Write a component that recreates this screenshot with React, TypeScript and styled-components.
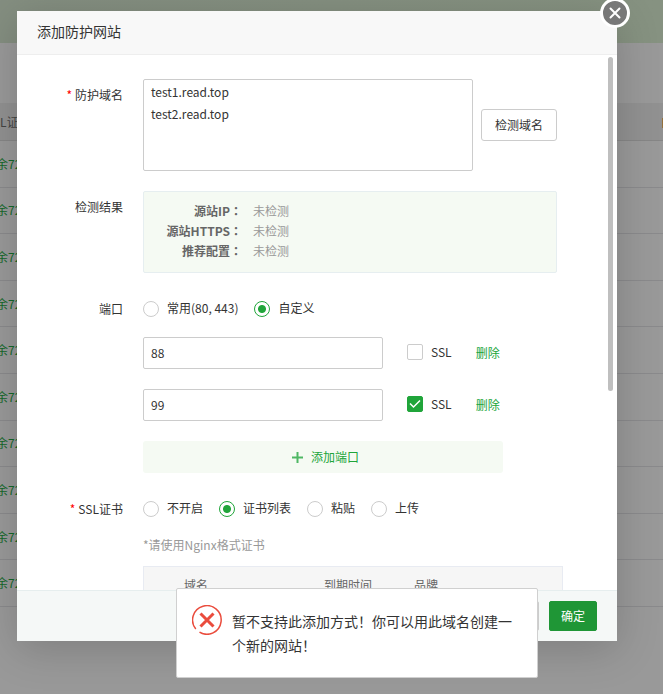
import React, { useState } from "react";
import styled, { createGlobalStyle, css } from "styled-components";

const GREEN = "#20a53a";

const GlobalStyle = createGlobalStyle`
  *, *::before, *::after { box-sizing: border-box; }
  html, body { margin: 0; height: 100%; }
  body {
    font-family: "Noto Sans CJK SC", sans-serif;
    font-size: 12px;
    color: #333;
    background: #999;
    overflow: hidden;
  }
  button, input, textarea { font: inherit; color: inherit; margin: 0; }
`;

const Page = styled.div`
  position: relative;
  height: 100vh;
  overflow: hidden;
`;

/* Dimmed site list behind the dialog */
const Banner = styled.div`
  height: 43px;
  background: linear-gradient(90deg, #848e80, #869281);
`;

const ListTable = styled.table`
  display: block;
  margin-top: 60px;
  line-height: 20px;
`;

const ListHeader = styled.thead`
  display: block;
  background: #919191;
  border-bottom: 1px solid #868686;
`;

const HeadRow = styled.tr`
  display: flex;
  align-items: center;
  justify-content: space-between;
  height: 37px;
`;

const HeadCell = styled.th`
  padding: 0;
  margin-left: -14px;
  color: #444;
  font-weight: 400;
  white-space: nowrap;
`;

const HeadAction = styled.th`
  display: flex;
  padding: 0;
  margin-right: -11px;
`;

const ListBody = styled.tbody`
  display: grid;
  grid-template-rows: repeat(10, 1fr);
  height: 466px;
`;

const ListRow = styled.tr`
  display: flex;
  align-items: center;
  border-bottom: 1px solid #8a8a8c;
`;

const ListCell = styled.td`
  padding: 0;
  margin-left: -16px;
  color: #14682a;
  white-space: nowrap;
`;

const Overlay = styled.div`
  position: absolute;
  inset: 0;
  display: flex;
  padding: 11px 46px 53px 17px;
`;

const Dialog = styled.section`
  position: relative;
  flex: 1;
  min-width: 0;
  display: flex;
  flex-direction: column;
  background: #fff;
  box-shadow: 0 8px 40px rgba(0, 0, 0, 0.18);
`;

const DialogHeader = styled.header`
  flex: none;
  height: 44px;
  padding: 0 20px;
  background: #f8f8f8;
  border-bottom: 1px solid #eee;
`;

const Title = styled.h1`
  margin: 0;
  font-size: 14px;
  font-weight: 400;
  line-height: 40px;
`;

const CloseButton = styled.button`
  position: absolute;
  top: -13px;
  right: -13px;
  width: 30px;
  height: 30px;
  display: grid;
  place-items: center;
  padding: 0;
  border: 3px solid #fff;
  border-radius: 50%;
  background: #787878;
  color: #fff;
`;

const DialogBody = styled.div`
  position: relative;
  flex: 1;
  min-height: 0;
  overflow: hidden;
  padding-top: 24px;
`;

const ScrollThumb = styled.div`
  position: absolute;
  top: 2px;
  right: 4px;
  width: 5px;
  height: 334px;
  border-radius: 3px;
  background: #bfbfbf;
`;

const Form = styled.form`
  display: flex;
  flex-direction: column;
  gap: 20px;
`;

const Field = styled.div`
  display: grid;
  grid-template-columns: 106px minmax(0, 1fr);
  column-gap: 20px;
  padding-right: 54px;
`;

const fieldName = css`
  line-height: 32px;
  text-align: right;
`;

const FieldLabel = styled.label`
  ${fieldName}
`;

const FieldName = styled.span`
  ${fieldName}
`;

const Required = styled.span`
  color: #f00;
  margin-right: 3px;
`;

const DomainRow = styled.div`
  display: flex;
  align-items: center;
  gap: 8px;
  padding-right: 6px;
`;

const DomainArea = styled.textarea`
  display: block;
  flex: 1;
  min-width: 0;
  height: 92px;
  padding: 1px 7px;
  border: 1px solid #ccc;
  border-radius: 2px;
  line-height: 22px;
  resize: none;
  outline: none;
`;

const PlainButton = styled.button`
  height: 32px;
  padding: 0 13px 2px;
  border: 1px solid #ccc;
  border-radius: 3px;
  background: #fff;
`;

const ResultPanel = styled.dl`
  display: grid;
  grid-template-columns: 98px 1fr;
  column-gap: 11px;
  align-content: start;
  height: 82px;
  margin: 0 6px 0 0;
  padding-top: 9px;
  border: 1px solid #e6eef0;
  border-radius: 2px;
  background: #f5faf3;
  line-height: 20px;
`;

const ResultName = styled.dt`
  color: #666;
  font-weight: 700;
  text-align: right;
`;

const Colon = styled.span`
  font-family: "Noto Sans CJK JP", sans-serif;
`;

const ResultValue = styled.dd`
  margin: 0;
  color: #999;
`;

const PortColumn = styled.div`
  display: flex;
  flex-direction: column;
`;

const RadioRow = styled.div`
  display: flex;
  align-items: center;
  gap: 16px;
  height: 32px;
`;

const Choice = styled.label`
  display: flex;
  align-items: center;
  gap: 8px;
  white-space: nowrap;
  line-height: 20px;
`;

const ChoiceText = styled.span`
  padding-bottom: 2px;
`;

const Radio = styled.input`
  appearance: none;
  flex: none;
  width: 16px;
  height: 16px;
  border: 1px solid #ccc;
  border-radius: 50%;
  background: #fff;
  &:checked {
    border-color: ${GREEN};
    background: radial-gradient(circle, ${GREEN} 3.5px, #fff 4.5px);
  }
`;

const PortList = styled.div`
  display: flex;
  flex-direction: column;
  gap: 20px;
  margin-top: 12px;
`;

const PortRow = styled.div`
  display: flex;
  align-items: center;
`;

const PortInput = styled.input`
  width: 240px;
  height: 32px;
  margin-right: 24px;
  padding: 0 7px 2px;
  border: 1px solid #ccc;
  border-radius: 2px;
  outline: none;
`;

const PortSsl = styled(Choice)`
  padding-bottom: 2px;
`;

const CheckWrap = styled.span`
  display: grid;
  width: 16px;
  height: 16px;
  > * { grid-area: 1 / 1; }
  svg { pointer-events: none; }
`;

const Checkbox = styled.input`
  appearance: none;
  width: 16px;
  height: 16px;
  border: 1px solid #ccc;
  border-radius: 2px;
  &:checked {
    border-color: ${GREEN};
    background: ${GREEN};
  }
`;

const TextButton = styled.button`
  margin-left: 24px;
  padding: 0 0 2px;
  border: 0;
  background: none;
  color: ${GREEN};
`;

const AddPort = styled.button`
  display: flex;
  align-items: center;
  justify-content: center;
  gap: 8px;
  width: 360px;
  height: 32px;
  padding: 0 0 0 5px;
  border: 0;
  border-radius: 3px;
  background: #f5faf3;
  color: ${GREEN};
`;

const Hint = styled.p`
  margin: 10px 0 11px;
  color: #999;
  line-height: 20px;
`;

const CertTable = styled.table`
  width: 100%;
  table-layout: fixed;
  border: 1px solid #e8ebf2;
  border-collapse: separate;
  border-spacing: 0;
`;

const CertHead = styled.th<{ $width?: number }>`
  ${(p) => p.$width && `width: ${p.$width}px;`}
  height: 36px;
  padding: 0 0 2px;
  background: #f6f6f6;
  color: #666;
  font-weight: 400;
  text-align: left;
`;

const DialogFooter = styled.footer`
  flex: none;
  display: flex;
  justify-content: flex-end;
  gap: 10px;
  height: 51px;
  padding: 10px 20px;
  border-top: 1px solid #e6eeee;
  background: #f5f8f7;
`;

const FooterButton = styled.button<{ $primary?: boolean }>`
  width: 48px;
  height: 30px;
  padding: 0 0 2px;
  border: 1px solid ${(p) => (p.$primary ? "#1f9636" : "#ccc")};
  border-radius: 2px;
  background: ${(p) => (p.$primary ? "#1f9636" : "#fff")};
  color: ${(p) => (p.$primary ? "#fff" : "#555")};
`;

const Toast = styled.div`
  position: absolute;
  left: 176px;
  bottom: 16px;
  width: 362px;
  display: flex;
  gap: 10px;
  padding: 16px 24px 18px 15px;
  min-height: 90px;
  border: 1px solid #d0d0d0;
  border-radius: 2px;
  background: #fff;
  svg { flex: none; }
`;

const ToastText = styled.p`
  margin: 4px 0 0;
  font-size: 14px;
  line-height: 24px;
`;

const sites = Array.from({ length: 10 }, (_, i) => i);
const results = ["源站IP", "源站HTTPS", "推荐配置"];
const certModes = ["不开启", "证书列表", "粘贴", "上传"];

function SiteList() {
  return (
    <ListTable>
      <ListHeader>
        <HeadRow>
          <HeadCell>SSL证书</HeadCell>
          <HeadAction aria-label="提示">
            <svg width="12" height="12" viewBox="0 0 12 12" fill="#94703c">
              <path d="M0 2H12V12H0Z" />
            </svg>
          </HeadAction>
        </HeadRow>
      </ListHeader>
      <ListBody>
        {sites.map((i) => (
          <ListRow key={i}><ListCell>剩余72天</ListCell></ListRow>
        ))}
      </ListBody>
    </ListTable>
  );
}

export default function App() {
  const [ports, setPorts] = useState([
    { id: 1, value: "88", ssl: false },
    { id: 2, value: "99", ssl: true },
  ]);
  const update = (id: number, patch: { value?: string; ssl?: boolean }) =>
    setPorts(ports.map((p) => (p.id === id ? { ...p, ...patch } : p)));

  return (
    <>
      <GlobalStyle />
      <Page>
        <Banner />
        <SiteList />
        <Overlay>
          <Dialog role="dialog" aria-labelledby="dialog-title">
            <DialogHeader>
              <Title id="dialog-title">添加防护网站</Title>
            </DialogHeader>
            <DialogBody>
              <Form onSubmit={(e) => e.preventDefault()}>
                <Field>
                  <FieldLabel htmlFor="domains"><Required>*</Required>防护域名</FieldLabel>
                  <DomainRow>
                    <DomainArea id="domains" spellCheck={false} defaultValue={"test1.read.top\ntest2.read.top"} />
                    <PlainButton type="button">检测域名</PlainButton>
                  </DomainRow>
                </Field>
                <Field>
                  <FieldName>检测结果</FieldName>
                  <ResultPanel>
                    {results.map((name) => (
                      <React.Fragment key={name}>
                        <ResultName>{name}<Colon>：</Colon></ResultName>
                        <ResultValue>未检测</ResultValue>
                      </React.Fragment>
                    ))}
                  </ResultPanel>
                </Field>
                <Field>
                  <FieldName>端口</FieldName>
                  <PortColumn>
                    <RadioRow role="radiogroup" aria-label="端口">
                      <Choice><Radio type="radio" name="port" /><ChoiceText>常用(80, 443)</ChoiceText></Choice>
                      <Choice><Radio type="radio" name="port" defaultChecked /><ChoiceText>自定义</ChoiceText></Choice>
                    </RadioRow>
                    <PortList>
                      {ports.map((p) => (
                        <PortRow key={p.id}>
                          <PortInput aria-label="端口" value={p.value} onChange={(e) => update(p.id, { value: e.target.value })} />
                          <PortSsl>
                            <CheckWrap>
                              <Checkbox type="checkbox" checked={p.ssl} onChange={(e) => update(p.id, { ssl: e.target.checked })} />
                              {p.ssl && (
                                <svg width="16" height="16" viewBox="0 0 16 16" fill="none" stroke="#fff" strokeWidth="1.5">
                                  <path d="M3 7.5 6.5 11 13 4.5" />
                                </svg>
                              )}
                            </CheckWrap>
                            SSL
                          </PortSsl>
                          <TextButton type="button" onClick={() => setPorts(ports.filter((q) => q.id !== p.id))}>删除</TextButton>
                        </PortRow>
                      ))}
                      <AddPort type="button" onClick={() => setPorts([...ports, { id: Date.now(), value: "", ssl: false }])}>
                        <svg width="11" height="11" viewBox="0 0 11 11" stroke="#4fb764" strokeWidth="2">
                          <path d="M5.5 0V11M0 5.5H11" />
                        </svg>
                        <ChoiceText>添加端口</ChoiceText>
                      </AddPort>
                    </PortList>
                  </PortColumn>
                </Field>
                <Field>
                  <FieldName><Required>*</Required>SSL证书</FieldName>
                  <div>
                    <RadioRow role="radiogroup" aria-label="SSL证书">
                      {certModes.map((m) => (
                        <Choice key={m}>
                          <Radio type="radio" name="cert" defaultChecked={m === "证书列表"} />
                          <ChoiceText>{m}</ChoiceText>
                        </Choice>
                      ))}
                    </RadioRow>
                    <Hint>*请使用Nginx格式证书</Hint>
                    <CertTable>
                      <thead>
                        <tr>
                          <CertHead $width={40} />
                          <CertHead $width={140}>域名</CertHead>
                          <CertHead $width={90}>到期时间</CertHead>
                          <CertHead>品牌</CertHead>
                        </tr>
                      </thead>
                    </CertTable>
                  </div>
                </Field>
              </Form>
              <ScrollThumb />
            </DialogBody>
            <DialogFooter>
              <FooterButton type="button" aria-label="取消" />
              <FooterButton type="button" $primary>确定</FooterButton>
            </DialogFooter>
            <CloseButton type="button" aria-label="关闭">
              <svg width="12" height="12" viewBox="0 0 12 12" stroke="#fff" strokeWidth="2" strokeLinecap="round">
                <path d="M1.5 1.5 10.5 10.5M10.5 1.5 1.5 10.5" />
              </svg>
            </CloseButton>
          </Dialog>
        </Overlay>
        <Toast role="alert">
          <svg width="30" height="30" viewBox="0 0 30 30" fill="none" stroke="#ea4c3d">
            <path d="M3.8 24A14.3 14.3 0 1 1 7.5 27.2" strokeWidth="1.5" />
            <path d="M8.5 8.5 21.5 21.5M21.5 8.5 8.5 21.5" strokeWidth="3" />
          </svg>
          <ToastText>暂不支持此添加方式！你可以用此域名创建一个新的网站！</ToastText>
        </Toast>
      </Page>
    </>
  );
}
